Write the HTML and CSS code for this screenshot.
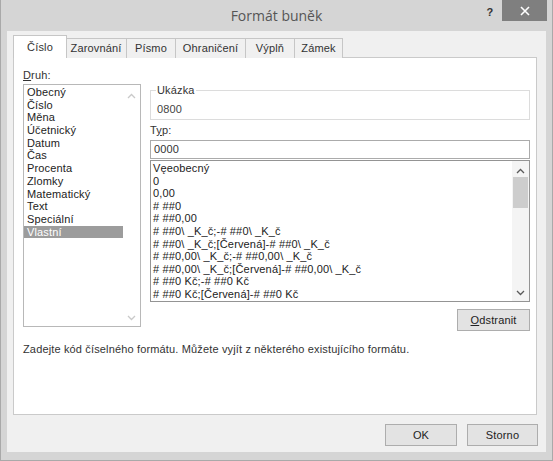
FILE: index.html
```html
<!DOCTYPE html>
<html lang="cs">
<head>
<meta charset="utf-8">
<title>Formát buněk</title>
<link rel="stylesheet" href="styles.css">
</head>
<body>
<div class="window">
  <div class="titlebar">
    <div></div>
    <div class="title">Formát buněk</div>
    <div class="tb-controls">
      <span class="help">?</span>
      <span class="close"><svg width="10" height="10" viewBox="0 0 10 10"><path d="M1 1L9 9M9 1L1 9" stroke="#fff" stroke-width="1.6" fill="none"/></svg></span>
    </div>
  </div>
  <div class="client">
    <div class="tabs">
      <div class="tab active t1">Číslo</div>
      <div class="tab t2">Zarovnání</div>
      <div class="tab t3">Písmo</div>
      <div class="tab t4">Ohraničení</div>
      <div class="tab t5">Výplň</div>
      <div class="tab t6">Zámek</div>
    </div>
    <div class="panel">
      <div class="cols">
        <div class="col-left">
          <div class="label"><u>D</u>ruh:</div>
          <div class="listbox cat">
            <ul class="items">
              <li>Obecný</li>
              <li>Číslo</li>
              <li>Měna</li>
              <li>Účetnický</li>
              <li>Datum</li>
              <li>Čas</li>
              <li>Procenta</li>
              <li>Zlomky</li>
              <li>Matematický</li>
              <li>Text</li>
              <li>Speciální</li>
              <li class="selected">Vlastní</li>
            </ul>
            <div class="vscroll disabled">
              <svg class="chev" width="9" height="6" viewBox="0 0 9 6"><polyline points="1,5 4.5,1.5 8,5" fill="none" stroke="currentColor" stroke-width="1.3"/></svg>
              <svg class="chev" width="9" height="6" viewBox="0 0 9 6"><polyline points="1,1 4.5,4.5 8,1" fill="none" stroke="currentColor" stroke-width="1.3"/></svg>
            </div>
          </div>
        </div>
        <div class="col-right">
          <fieldset class="sample">
            <legend>Ukázka</legend>
            <div class="sample-val">0800</div>
          </fieldset>
          <div class="label typ">T<u>y</u>p:</div>
          <div class="input">0000</div>
          <div class="listbox fmt">
            <ul class="items">
              <li>Vęeobecný</li>
              <li>0</li>
              <li>0,00</li>
              <li># ##0</li>
              <li># ##0,00</li>
              <li># ##0\ _K_č;-# ##0\ _K_č</li>
              <li># ##0\ _K_č;[Červená]-# ##0\ _K_č</li>
              <li># ##0,00\ _K_č;-# ##0,00\ _K_č</li>
              <li># ##0,00\ _K_č;[Červená]-# ##0,00\ _K_č</li>
              <li># ##0 Kč;-# ##0 Kč</li>
              <li># ##0 Kč;[Červená]-# ##0 Kč</li>
            </ul>
            <div class="vscroll">
              <svg class="chev" width="9" height="6" viewBox="0 0 9 6"><polyline points="1,5 4.5,1.5 8,5" fill="none" stroke="currentColor" stroke-width="1.3"/></svg>
              <div class="thumb"></div>
              <div class="track"></div>
              <svg class="chev" width="9" height="6" viewBox="0 0 9 6"><polyline points="1,1 4.5,4.5 8,1" fill="none" stroke="currentColor" stroke-width="1.3"/></svg>
            </div>
          </div>
          <div class="btn-row"><button class="btn del"><u>O</u>dstranit</button></div>
        </div>
      </div>
      <p class="desc">Zadejte kód číselného formátu. Můžete vyjít z některého existujícího formátu.</p>
    </div>
    <div class="footer">
      <button class="btn ok">OK</button>
      <button class="btn cancel">Storno</button>
    </div>
  </div>
</div>
</body>
</html>
```
FILE: styles.css
```css
* { box-sizing: border-box; }
html, body { margin: 0; padding: 0; }
body {
  width: 553px;
  height: 461px;
  overflow: hidden;
  background: #cfcfcf;
  font-family: "Liberation Sans", Arial, sans-serif;
  font-size: 11px;
  letter-spacing: 0.15px;
  color: #222;
}
.window {
  height: 461px;
  display: flex;
  flex-direction: column;
  background: #d5d5d5;
  border-left: 1px solid #a9a9a9;
  border-right: 1px solid #a9a9a9;
  border-bottom: 1px solid #a9a9a9;
  padding: 0 6px 8px 6px;
}
.titlebar {
  height: 31px;
  display: grid;
  grid-template-columns: 1fr auto 1fr;
}
.title {
  font-family: "Open Sans", "Noto Sans", sans-serif;
  letter-spacing: 0;
  font-size: 14px;
  color: #555;
  line-height: 31px;
  align-self: center;
}
.tb-controls {
  justify-self: end;
  display: flex;
  align-items: flex-start;
  margin-right: -1px;
}
.help {
  width: 24px;
  height: 21px;
  text-align: center;
  font-size: 11px;
  font-weight: bold;
  color: #333;
  line-height: 24px;
}
.close {
  width: 45px;
  height: 21px;
  background: #7f7f7f;
  display: flex;
  align-items: center;
  justify-content: center;
}
.client {
  flex: 1;
  background: #f0f0f0;
  padding: 4px 9px 6px 6px;
  display: flex;
  flex-direction: column;
}
.tabs {
  display: flex;
  align-items: flex-end;
  height: 23px;
  position: relative;
  z-index: 1;
}
.tab {
  height: 20px;
  border: 1px solid #c6c6c6;
  border-bottom: none;
  margin-left: -1px;
  background: #f0f0f0;
  line-height: 19px;
  text-align: center;
  color: #333;
}
.tab.active {
  margin-left: 0;
  height: 23px;
  background: #fff;
  line-height: 22px;
  margin-right: -1px;
  position: relative;
  z-index: 2;
}
.t1 { width: 54px; }
.t2 { width: 62px; }
.t3 { width: 50px; }
.t4 { width: 71px; }
.t5 { width: 50px; }
.t6 { width: 49px; }
.panel {
  height: 358px;
  background: #fff;
  border: 1px solid #cacaca;
  margin-top: -1px;
  padding: 11px 6px 0 9px;
}
.cols {
  display: flex;
  gap: 9px;
}
.col-left { width: 118px; }
.col-right { width: 380px; }
.label {
  line-height: 13px;
  height: 13px;
  margin-bottom: 2px;
  color: #333;
}
.listbox {
  display: flex;
  background: #fff;
}
.items {
  list-style: none;
  margin: 0;
  flex: 1;
  padding: 1px 0 0 0;
  overflow: hidden;
}
.items li {
  line-height: 12.7px;
  height: 12.7px;
  padding-left: 3px;
  white-space: nowrap;
}
.cat {
  height: 243px;
  border: 1px solid #b8b8b8;
}
.cat .items li.selected {
  background: #9c9c9c;
  color: #fff;
}
.vscroll {
  width: 17px;
  display: flex;
  flex-direction: column;
  align-items: center;
  color: #5a5a5a;
}
.vscroll.disabled {
  color: #c9c9c9;
  justify-content: space-between;
  padding: 8px 0 5px;
}
.sample {
  margin: 15px 0 0 0;
  border: 1px solid #dcdcdc;
  padding: 0 5px 3px;
  min-width: 0;
}
.sample legend {
  padding: 0 1px;
  line-height: 13px;
  color: #333;
}
.sample-val {
  line-height: 13px;
  padding-top: 6px;
  padding-left: 1px;
  color: #444;
}
.label.typ {
  margin-top: 4px;
  margin-bottom: 3px;
}
.input {
  height: 19px;
  border: 1px solid #ababab;
  padding-left: 3px;
  line-height: 17px;
  color: #333;
}
.fmt {
  margin-top: 1px;
  height: 142px;
  border: 1px solid #949494;
}
.fmt .items { padding-top: 1px; }
.fmt .items li { line-height: 12.6px; height: 12.6px; padding-left: 2px; }
.fmt .vscroll {
  background: #f4f4f4;
  padding: 7px 0 5px;
}
.thumb {
  width: 15px;
  height: 31px;
  background: #cdcdcd;
  margin-top: 3px;
}
.track { flex: 1; }
.btn-row {
  display: flex;
  justify-content: flex-end;
  margin-top: 7px;
}
.btn {
  font-family: inherit;
  font-size: 11px;
  letter-spacing: 0.15px;
  color: #222;
  background: #e3e3e3;
  border: 1px solid #adadad;
  height: 22px;
  padding: 0;
  margin: 0;
}
.del { width: 73px; }
.desc {
  margin: 12px 0 0 0;
  line-height: 13px;
  color: #333;
}
.footer {
  display: flex;
  justify-content: flex-end;
  gap: 10px;
  margin-top: 9px;
  margin-right: -1px;
}
.ok { width: 72px; }
.cancel { width: 71px; }
```
